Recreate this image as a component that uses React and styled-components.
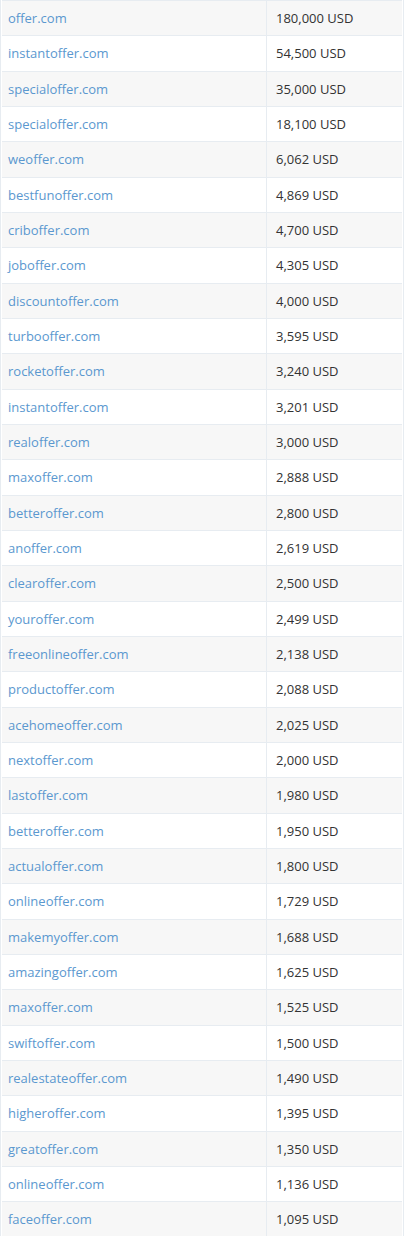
import React from "react";
import styled, { createGlobalStyle } from "styled-components";

const Global = createGlobalStyle`
  html, body { margin: 0; padding: 0; background: #fff; }
  body { font-family: "Open Sans", "Liberation Sans", sans-serif; font-size: 13px; color: #333; }
`;

const rows = [
  ["offer.com", "180,000 USD"],
  ["instantoffer.com", "54,500 USD"],
  ["specialoffer.com", "35,000 USD"],
  ["specialoffer.com", "18,100 USD"],
  ["weoffer.com", "6,062 USD"],
  ["bestfunoffer.com", "4,869 USD"],
  ["criboffer.com", "4,700 USD"],
  ["joboffer.com", "4,305 USD"],
  ["discountoffer.com", "4,000 USD"],
  ["turbooffer.com", "3,595 USD"],
  ["rocketoffer.com", "3,240 USD"],
  ["instantoffer.com", "3,201 USD"],
  ["realoffer.com", "3,000 USD"],
  ["maxoffer.com", "2,888 USD"],
  ["betteroffer.com", "2,800 USD"],
  ["anoffer.com", "2,619 USD"],
  ["clearoffer.com", "2,500 USD"],
  ["youroffer.com", "2,499 USD"],
  ["freeonlineoffer.com", "2,138 USD"],
  ["productoffer.com", "2,088 USD"],
  ["acehomeoffer.com", "2,025 USD"],
  ["nextoffer.com", "2,000 USD"],
  ["lastoffer.com", "1,980 USD"],
  ["betteroffer.com", "1,950 USD"],
  ["actualoffer.com", "1,800 USD"],
  ["onlineoffer.com", "1,729 USD"],
  ["makemyoffer.com", "1,688 USD"],
  ["amazingoffer.com", "1,625 USD"],
  ["maxoffer.com", "1,525 USD"],
  ["swiftoffer.com", "1,500 USD"],
  ["realestateoffer.com", "1,490 USD"],
  ["higheroffer.com", "1,395 USD"],
  ["greatoffer.com", "1,350 USD"],
  ["onlineoffer.com", "1,136 USD"],
  ["faceoffer.com", "1,095 USD"],
];

const Table = styled.div`
  width: 404px;
  box-sizing: border-box;
  border-left: 1px solid #e7ecf1;
  border-right: 1px solid #e7ecf1;
  padding: 0 1px;
  display: grid;
  grid-template-columns: 264px 1fr;
`;

const Row = styled.div`
  display: contents;
`;

const Cell = styled.div`
  box-sizing: border-box;
  height: 35.343px;
  padding: 0 ${(p) => (p.$divider ? "9px" : "6px")};
  display: flex;
  align-items: center;
  border-top: 1px solid #e7ecf1;
  background: ${(p) => (p.$odd ? "#f7f7f7" : "#fff")};
  border-left: ${(p) => (p.$divider ? "1px solid #e7ecf1" : "none")};
  white-space: nowrap;
`;

const Link = styled.a`
  color: #5b98cf;
  text-decoration: none;
`;

export default function App() {
  return (
    <>
      <Global />
      <Table>
        {rows.map(([d, p], i) => (
          <Row key={i}>
            <Cell $odd={i % 2 === 0}>
              <Link href="#">{d}</Link>
            </Cell>
            <Cell $odd={i % 2 === 0} $divider>
              {p}
            </Cell>
          </Row>
        ))}
      </Table>
    </>
  );
}
